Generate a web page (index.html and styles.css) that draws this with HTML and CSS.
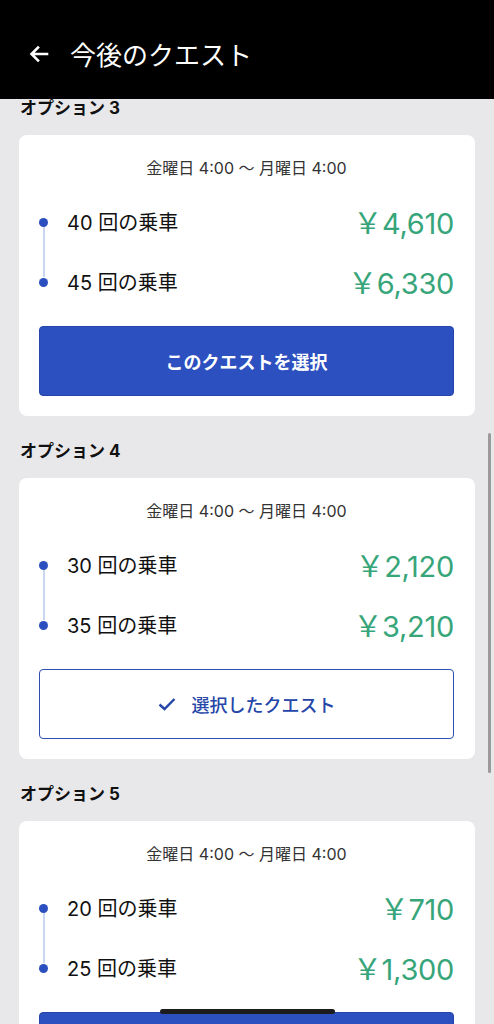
FILE: index.html
```html
<!DOCTYPE html>
<html lang="ja">
<head>
  <meta charset="UTF-8">
  <meta name="viewport" content="width=device-width, initial-scale=1.0">
  <title>今後のクエスト</title>
  <link rel="stylesheet" href="styles.css">
</head>
<body>
  <header class="topbar">
    <svg class="back" width="20" height="18" viewBox="0 0 20 18">
      <path d="M18 9H3M9 2.5L2.5 9L9 15.5" fill="none" stroke="#fff" stroke-width="2.6" stroke-linecap="square"/>
    </svg>
    <h1>今後のクエスト</h1>
  </header>

  <main class="quests">
    <h2 class="option-title">オプション 3</h2>
    <section class="card">
      <p class="period">金曜日 4:00 〜 月曜日 4:00</p>
      <ul class="steps">
        <li><span class="dot"></span><span class="rides">40 回の乗車</span><span class="price">￥4,610</span></li>
        <li><span class="dot"></span><span class="rides">45 回の乗車</span><span class="price">￥6,330</span></li>
      </ul>
      <button class="btn btn-primary">このクエストを選択</button>
    </section>

    <h2 class="option-title">オプション 4</h2>
    <section class="card">
      <p class="period">金曜日 4:00 〜 月曜日 4:00</p>
      <ul class="steps">
        <li><span class="dot"></span><span class="rides">30 回の乗車</span><span class="price">￥2,120</span></li>
        <li><span class="dot"></span><span class="rides">35 回の乗車</span><span class="price">￥3,210</span></li>
      </ul>
      <button class="btn btn-selected">
        <svg width="18" height="14" viewBox="0 0 18 14">
          <path d="M1.5 7.5L6.5 12L16.5 2" fill="none" stroke="#2546a8" stroke-width="2.4"/>
        </svg>
        選択したクエスト
      </button>
    </section>

    <h2 class="option-title">オプション 5</h2>
    <section class="card">
      <p class="period">金曜日 4:00 〜 月曜日 4:00</p>
      <ul class="steps">
        <li><span class="dot"></span><span class="rides">20 回の乗車</span><span class="price">￥710</span></li>
        <li><span class="dot"></span><span class="rides">25 回の乗車</span><span class="price">￥1,300</span></li>
      </ul>
      <button class="btn btn-primary">このクエストを選択</button>
    </section>
  </main>

  <div class="scrollbar"></div>
  <div class="home-indicator"></div>
</body>
</html>
```

FILE: styles.css
```css
html, body {
    height: 100%;
    overflow: hidden;
}
body {
    margin: 0;
    background-color: #e8e8ea;
    font-family: Inter, "Noto Sans CJK JP", sans-serif;
    color: #111;
}
.topbar {
    height: 99px;
    background-color: #000;
    display: flex;
    align-items: center;
    padding: 8px 0 0 29px;
    box-sizing: border-box;
}
.topbar h1 {
    margin: 0 0 0 21px;
    font-size: 26px;
    font-weight: 400;
    color: #fff;
    font-family: "Noto Sans CJK JP", sans-serif;
}
.quests {
    padding: 0 19px;
}
.option-title {
    margin: 23px 0 15px 1px;
    font-size: 17px;
    line-height: 24px;
    font-weight: 700;
}
.option-title:first-child {
    margin-top: -3px;
}
.card {
    background-color: #fff;
    border-radius: 8px;
    padding: 23px 21px 20px 20px;
}
.period {
    margin: 0;
    text-align: center;
    font-size: 16px;
    line-height: 21px;
    color: #333;
}
.steps {
    list-style: none;
    margin: 12px 0 0;
    padding: 0;
    position: relative;
}
/* line between the dots */
.steps::before {
    content: "";
    position: absolute;
    left: 4px;
    top: 36px;
    height: 50px;
    width: 2px;
    background-color: #c8d6f0;
}
.steps li {
    display: flex;
    align-items: center;
    height: 60px;
}
.dot {
    width: 9px;
    height: 9px;
    border-radius: 50%;
    background-color: #2b4fbe;
    margin-top: 2px;
}
.rides {
    margin-left: 19px;
    font-size: 20px;
}
.price {
    margin-left: auto;
    font-size: 29px;
    color: #37a57a;
    letter-spacing: -0.3px;
}
.btn {
    display: flex;
    align-items: center;
    justify-content: center;
    width: 100%;
    height: 70px;
    margin-top: 15px;
    border-radius: 4px;
    font-family: "Noto Sans CJK JP", sans-serif;
    font-size: 18px;
    cursor: pointer;
}
.btn-primary {
    background-color: #2c50bf;
    border: 1px solid #2545ac;
    color: #fff;
    font-weight: 700;
}
.btn-selected {
    background-color: #fff;
    border: 1px solid #2e4faf;
    color: #2546a8;
    font-weight: 500;
    gap: 16px;
}
.scrollbar {
    position: fixed;
    right: 3px;
    top: 433px;
    width: 3px;
    height: 340px;
    border-radius: 2px;
    background-color: #9a9a9c;
}
.home-indicator {
    position: fixed;
    left: 160px;
    bottom: 10px;
    width: 175px;
    height: 5px;
    border-radius: 3px;
    background-color: #1c1c1e;
}
```
